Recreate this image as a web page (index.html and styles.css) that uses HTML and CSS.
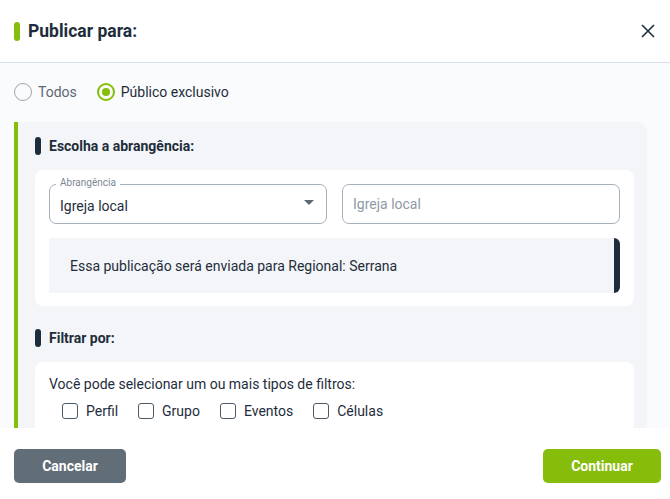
FILE: index.html
```html
<!DOCTYPE html>
<html lang="pt-BR">
<head>
	<meta charset="UTF-8">
	<title>Publicar para</title>
	<link rel="stylesheet" href="styles.css">
</head>
<body>
	<div class="modal">
		<div class="modal-header">
			<h1 class="title"><span class="mark green"></span>Publicar para:</h1>
			<button class="close" type="button" aria-label="Fechar">
				<svg width="14" height="14" viewBox="0 0 14 14"><path d="M1 1L13 13M13 1L1 13" stroke="#1e2d3b" stroke-width="1.6" fill="none"/></svg>
			</button>
		</div>
		<div class="modal-body">
			<div class="radios">
				<label class="radio"><span class="dot"></span>Todos</label>
				<label class="radio checked"><span class="dot"></span>Público exclusivo</label>
			</div>
			<div class="panel">
				<h2 class="subtitle"><span class="mark dark"></span>Escolha a abrangência:</h2>
				<div class="card">
					<div class="fields">
						<div class="field">
							<span class="legend">Abrangência</span>
							<span class="value">Igreja local</span>
							<span class="arrow"></span>
						</div>
						<div class="field">
							<span class="placeholder">Igreja local</span>
						</div>
					</div>
					<div class="info">Essa publicação será enviada para Regional: Serrana</div>
				</div>
				<h2 class="subtitle"><span class="mark dark"></span>Filtrar por:</h2>
				<div class="card">
					<p class="hint">Você pode selecionar um ou mais tipos de filtros:</p>
					<div class="checks">
						<label class="check"><span class="box"></span>Perfil</label>
						<label class="check"><span class="box"></span>Grupo</label>
						<label class="check"><span class="box"></span>Eventos</label>
						<label class="check"><span class="box"></span>Células</label>
					</div>
				</div>
			</div>
		</div>
		<div class="modal-footer">
			<button class="btn cancel" type="button">Cancelar</button>
			<button class="btn confirm" type="button">Continuar</button>
		</div>
	</div>
</body>
</html>
```
FILE: styles.css
```css
* {margin: 0; padding: 0; box-sizing: border-box;}
body {font-family: Roboto, "Liberation Sans", sans-serif; color: #1e2d3b; background: #fff;}
.modal {width: 670px; height: 499px; display: flex; flex-direction: column; overflow: hidden;}

.modal-header {height: 63px; flex: none; display: flex; align-items: center; justify-content: space-between; padding: 0 12px 0 14px; border-bottom: 1px solid #d9e0e7; background: #fff;}
.title {font-size: 17.5px; font-weight: 700; display: flex; align-items: center; gap: 8px; color: #1e2d3b;}
.mark {display: inline-block; width: 6px; height: 19px; border-radius: 3px;}
.mark.green {background: #86bc0a;}
.mark.dark {background: #1e2d3b; height: 18px;}
.close {border: 0; background: none; width: 20px; height: 20px; display: flex; align-items: center; justify-content: center; cursor: pointer;}

.modal-body {flex: 1; overflow: hidden; background: #fafbfc; padding: 20px 23px 0 14px;}
.radios {display: flex; gap: 20px; height: 18px; align-items: center; font-size: 14px;}
.radio {display: flex; align-items: center; gap: 6px; color: #5b6875;}
.radio .dot {width: 18px; height: 18px; border: 1.5px solid #9ba6b1; border-radius: 50%; display: flex; align-items: center; justify-content: center;}
.radio.checked {color: #1e2d3b;}
.radio.checked .dot {border: 2px solid #86bc0a;}
.radio.checked .dot::after {content: ""; width: 8px; height: 8px; border-radius: 50%; background: #86bc0a;}

.panel {margin-top: 21px; background: #f3f5f8; border-left: 4px solid #86bc0a; border-radius: 0 10px 0 0; padding: 15px 13px 20px 17px;}
.subtitle {font-size: 14px; font-weight: 700; display: flex; align-items: center; gap: 8px; height: 18px;}
.card {background: #fff; border-radius: 8px; margin-top: 15px; padding: 14px 14px 13px;}
.card + .subtitle {margin-top: 23px;}

.fields {display: flex; gap: 15px;}
.field {flex: 1; height: 40px; border: 1.5px solid #a6b0ba; border-radius: 7px; position: relative; display: flex; align-items: center; padding: 0 10px; font-size: 14px;}
.field .legend {position: absolute; top: -8px; left: 6px; background: #fff; padding: 0 4px; font-size: 10px; color: #7d8893;}
.field .value {padding-top: 3px; color: #1e2d3b;}
.field .placeholder {color: #8f9aa5;}
.field .arrow {position: absolute; right: 12px; top: 15px; border-left: 5px solid transparent; border-right: 5px solid transparent; border-top: 5px solid #5b6875;}

.info {margin-top: 14px; height: 55px; background: #f3f5f8; border-right: 6px solid #1e2d3b; border-radius: 0 6px 6px 0; display: flex; align-items: center; padding-left: 21px; font-size: 14px;}

.hint {font-size: 14px; line-height: 16px;}
.checks {display: flex; gap: 20px; margin-top: 11px; padding-left: 13px; font-size: 14px;}
.check {display: flex; align-items: center; gap: 8px;}
.check .box {width: 16px; height: 16px; border: 1.5px solid #4c5966; border-radius: 3px;}

.modal-footer {height: 71px; flex: none; display: flex; align-items: center; justify-content: space-between; padding: 4px 9px 0 14px; background: #fff;}
.btn {height: 34px; border: 0; border-radius: 5px; color: #fff; font-family: Roboto, sans-serif; font-weight: 700; font-size: 14px; cursor: pointer;}
.btn.cancel {width: 112px; background: #616d77;}
.btn.confirm {width: 118px; background: #86bc0a;}
```
